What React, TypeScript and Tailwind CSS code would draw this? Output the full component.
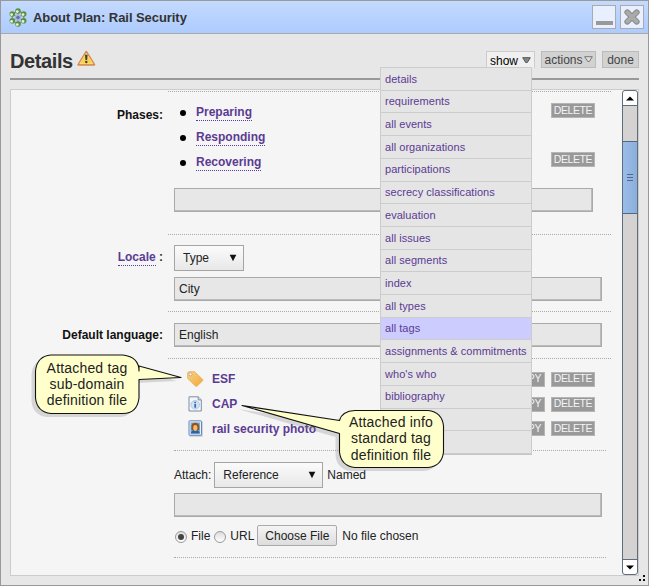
import React from "react";

const menuItems = [
  "details", "requirements", "all events", "all organizations", "participations",
  "secrecy classifications", "evaluation", "all issues", "all segments", "index",
  "all types", "all tags", "assignments & commitments", "who's who", "bibliography", "", "",
];

function PlanIcon() {
  const petals = [[9, 3], [14.7, 6], [14.7, 12.8], [9, 16], [3.3, 12.8], [3.3, 6]];
  return (
    <svg width="18" height="19" viewBox="0 0 18 19">
      <path d="M9 3L14.7 6V12.8L9 16L3.3 12.8V6ZM9 3V16M3.3 6L14.7 12.8M14.7 6L3.3 12.8" fill="none" stroke="#7f9f86" strokeWidth="1.5" />
      {petals.map(([x, y]) => (
        <g key={`${x}-${y}`}>
          <circle cx={x} cy={y} r="2.8" fill="#5c9142" />
          <circle cx={x - 0.7} cy={y + 0.6} r="1.4" fill="#e8f2e2" />
        </g>
      ))}
      <circle cx="9" cy="9.5" r="3.2" fill="#a9b5df" />
      <circle cx="9" cy="9.5" r="1.8" fill="#6670b4" />
    </svg>
  );
}

function WarningIcon() {
  return (
    <svg width="19" height="17" viewBox="0 0 19 17">
      <path d="M9.3 1.8L17.3 14.7H1.3Z" fill="#fdc84c" stroke="#d58b4e" strokeWidth="2" strokeLinejoin="round" />
      <path d="M9.3 3.3L15.9 13.7H2.7Z" fill="#ffcf45" stroke="#ffe69b" strokeWidth="0.7" />
      <path d="M8 4.8H10.6L10.1 10H8.5Z" fill="#38404a" />
      <circle cx="9.3" cy="12" r="1.2" fill="#38404a" />
    </svg>
  );
}

function TagIcon() {
  return (
    <svg width="18" height="18" viewBox="0 0 18 18">
      <defs>
        <linearGradient id="tag" x1="0" y1="0" x2="1" y2="1">
          <stop stopColor="#f6d28c" />
          <stop offset="1" stopColor="#f3a839" />
        </linearGradient>
      </defs>
      <path d="M1.5 3.2Q1.6 1.8 3 1.7L8.5 1.6L16.6 9.3Q17.3 10.2 16.5 11L11.2 16Q10.2 16.8 9.3 15.9L1.6 8.4Z" fill="url(#tag)" stroke="#e5ad53" strokeWidth="0.7" />
      <circle cx="4.5" cy="4.3" r="1.5" fill="#fff" stroke="#b7925a" strokeWidth="0.7" />
    </svg>
  );
}

function InfoFileIcon() {
  return (
    <svg width="15" height="16" viewBox="0 0 15 16">
      <path d="M1 0.8H10.2L13.3 3.9V15H1Z" fill="#f3f7fb" stroke="#7f8da3" />
      <path d="M10.2 0.8V3.9H13.3" fill="#d5dfea" stroke="#7f8da3" />
      <circle cx="7.2" cy="8.8" r="4.3" fill="#d3e3f2" stroke="#a9bfd6" strokeWidth="0.8" />
      <path d="M7.2 5.8V7.2M7.2 8V11.7" stroke="#2c74bd" strokeWidth="1.8" />
    </svg>
  );
}

function PhotoIcon() {
  return (
    <svg width="15" height="17" viewBox="0 0 15 17">
      <rect x="1.5" y="1.5" width="13" height="15" fill="#b8b8bb" />
      <rect x="1" y="0.8" width="12.5" height="14.4" rx="0.6" fill="#e8f0fa" stroke="#6188bb" />
      <rect x="2.5" y="2.4" width="9.5" height="11.2" fill="#79aee4" />
      <path d="M3 12.8Q3.5 10 7.2 9.8Q11 10 11.6 12.8V13.6H3Z" fill="#2f639f" />
      <path d="M3.4 10V6Q3.8 2.8 7.3 2.7Q10.9 2.8 11.2 6V10Z" fill="#96531b" />
      <ellipse cx="7.3" cy="8" rx="2.1" ry="2.9" fill="#f2bd68" />
    </svg>
  );
}

function Divider({ short = false }: { short?: boolean }) {
  return <div className={short ? "ml-[163px] w-[432px] border-t border-dotted border-[#aaaaaa]" : "ml-[157px] w-[443px] border-t border-dotted border-[#aaaaaa]"} />;
}

function Tool({ children, wide = false }: { children: React.ReactNode; wide?: boolean }) {
  return (
    <span className={`${wide ? "w-[44px]" : "w-[36px]"} flex h-[15px] shrink-0 items-center justify-center border border-[#b5b5b5] bg-[#999] text-[10.5px] tracking-[-0.4px] text-[#f4f4f4]`}>
      {children}
    </span>
  );
}

function PhaseRow({ name, del = false }: { name: string; del?: boolean }) {
  return (
    <div className="flex h-[24.8px] items-center">
      <span className="ml-[6px] mr-[10px] size-[6px] rounded-full bg-black" />
      <span className="h-[16px] border-b border-dotted border-[#5b3b9b] text-[12px] font-bold leading-[15px] text-[#5b3b93]">{name}</span>
      {del && <span className="-mt-[6px] ml-auto mr-[5px]"><Tool wide>DELETE</Tool></span>}
    </div>
  );
}

function AttachmentRow({ icon, name }: { icon: React.ReactNode; name: string }) {
  return (
    <div className="flex h-[24.7px] items-center">
      <span className="ml-[12px] flex w-[18px] justify-center">{icon}</span>
      <span className="ml-[8px] text-[12px] font-bold text-[#5b3b93]">{name}</span>
      <span className="ml-auto mr-[16px] flex gap-[6px]"><Tool>COPY</Tool><Tool wide>DELETE</Tool></span>
    </div>
  );
}

const field = "flex items-center border border-[#aaa] bg-[#e7e7e7] pl-[4px] text-[12px] text-[#222] shadow-[inset_-1px_-1px_0_#bbb]";
const select = "flex items-center justify-between border border-[#a5a5a5] bg-linear-to-b from-[#fbfbfb] to-[#e8e8e8] pl-[8px] pr-[6px] text-[12px] text-[#222]";

function DownArrow() {
  return <svg width="8" height="8" viewBox="0 0 8 8"><path d="M0.7 0.7H7.3L4 7.3Z" fill="#111" /></svg>;
}

function Radio({ checked = false }: { checked?: boolean }) {
  return (
    <span className="mt-[2px] flex size-[12px] items-center justify-center rounded-full border border-[#999] bg-linear-to-b from-[#ddd] to-white">
      {checked && <span className="size-[6px] rounded-full bg-[#444]" />}
    </span>
  );
}

function ScrollBar() {
  return (
    <div className="flex h-[485px] w-[16px] shrink-0 flex-col rounded-[3px] border border-[#606b7c] bg-[#d5d3d1]">
      <div className="flex h-[15px] items-center justify-center rounded-t-[3px] border-b border-[#606b7c] bg-white">
        <svg width="8" height="5"><path d="M0 4.5L4 0.5L8 4.5Z" fill="#000" /></svg>
      </div>
      <div className="mt-[35px] flex h-[73px] flex-col items-center justify-center gap-[2px] border-y border-[#526986] bg-linear-to-r from-[#9abde9] to-[#8baedb]">
        <span className="h-px w-[6px] bg-[#526986]" />
        <span className="h-px w-[6px] bg-[#526986]" />
        <span className="h-px w-[6px] bg-[#526986]" />
      </div>
      <div className="mt-auto flex h-[15px] items-center justify-center rounded-b-[3px] border-t border-[#606b7c] bg-white">
        <svg width="8" height="5"><path d="M0 0.5L4 4.5L8 0.5Z" fill="#000" /></svg>
      </div>
    </div>
  );
}

function Callouts() {
  const first = "M51 355H123Q139 357 139 371V366L181 377.5L139 379.5V398Q137 413.5 123 413.5H51Q37 412 35.5 398V371Q37 356 51 355Z";
  const second = "M355 410.5H428Q442 412 443.5 426V452Q442 466 428 467.5H355Q341 466 339.5 452V433.5L242 405.5L339.5 420.5Q342 411 355 410.5Z";
  return (
    <div className="pointer-events-none absolute inset-0">
      <svg width="650" height="586" className="absolute inset-0">
        <g transform="translate(-4 3.5)" fill="#777" opacity="0.25"><path d={first} /><path d={second} /></g>
        <g fill="#ffffcc" stroke="#111" strokeWidth="1.1" strokeLinejoin="round"><path d={first} /><path d={second} /></g>
      </svg>
      <p className="absolute left-[35px] top-[360px] w-[104px] text-center text-[14px] leading-[16px] tracking-[0.18px] text-[#222]">Attached tag<br />sub-domain<br />definition file</p>
      <p className="absolute left-[339px] top-[414px] w-[104px] text-center text-[14px] leading-[16.4px] tracking-[0.18px] text-[#222]">Attached info<br />standard tag<br />definition file</p>
    </div>
  );
}

export default function App() {
  return (
    <div className="relative h-[586px] w-[650px] overflow-hidden bg-white font-['Liberation_Sans',Arial,sans-serif]">
      <div className="flex h-[586px] w-[649px] flex-col border border-[#999] bg-[#e7e7e7]">
        <header className="flex h-[33px] shrink-0 items-center border-b border-[#aaa] bg-linear-to-b from-[#c4dafe] to-[#adcbfe] pl-[8px]">
          <PlanIcon />
          <h1 className="ml-[6px] mt-px text-[13px] font-bold tracking-[-0.06px] text-[#333]">About Plan: Rail Security</h1>
          <div className="ml-auto mr-[4px] flex gap-[4px]">
            <span className="flex h-[24px] w-[24px] items-end justify-center border border-[#aaa] bg-[#e8f0ff] pb-[3px]"><span className="h-[4px] w-[17px] bg-[#999]" /></span>
            <span className="flex h-[24px] w-[24px] items-center justify-center border border-[#aaa] bg-[#e8f0ff]">
              <svg width="18" height="18" viewBox="0 0 18 18"><path d="M4.3 4.3L13.7 13.7M13.7 4.3L4.3 13.7" stroke="#858585" strokeWidth="5.8" strokeLinecap="round" /><path d="M4.3 4.3L13.7 13.7M13.7 4.3L4.3 13.7" stroke="#aaa" strokeWidth="4" strokeLinecap="round" /></svg>
            </span>
          </div>
        </header>

        <div className="mx-[9px] flex h-[46px] shrink-0 items-start border-b-2 border-[#999]">
          <h2 className="mt-[14px] text-[20px] font-bold leading-[26px] tracking-[-0.4px] text-[#333]">Details</h2>
          <span className="ml-[4px] mt-[16px]"><WarningIcon /></span>
          <div className="ml-auto mt-[17px] flex gap-[6px] text-[12px] text-[#444]">
            <span className="flex h-[17px] w-[49px] items-center justify-center gap-[4px] border border-b-0 border-[#ccc] bg-[#f0f0f0] text-black"><span className="mt-px">show</span><svg width="9" height="7"><path d="M0.7 0.7H8.3L5.3 5.5H3.7Z" fill="#888" stroke="#555" /></svg></span>
            <span className="flex h-[17px] w-[55px] items-center justify-center gap-[1px] border border-[#bbb] bg-[#d2d2d2]"><span className="mt-px">actions</span><svg width="9" height="7"><path d="M0.7 0.7H8.3L5.3 5.5H3.7Z" fill="#ddd" stroke="#777" /></svg></span>
            <span className="flex h-[17px] w-[37px] items-center justify-center border border-[#bbb] bg-[#d2d2d2]"><span className="mt-px">done</span></span>
          </div>
        </div>

        <div className="mx-[9px] mt-[9px] flex h-[487px] shrink-0 border border-[#ccc] bg-[#f5f5f5]">
          <main className="flex w-[611px] shrink-0 flex-col pt-px">
            <Divider />
            <section className="flex h-[142px]">
              <span className="w-[152px] pt-[14px] text-right text-[12px] font-bold text-[#111]">Phases:</span>
              <div className="ml-[11px] w-[426px] pt-[9px]">
                <PhaseRow name="Preparing" del />
                <PhaseRow name="Responding" />
                <PhaseRow name="Recovering" del />
                <div className={`${field} mt-[13px] h-[24px] w-[419px]`} />
              </div>
            </section>
            <Divider />
            <section className="flex h-[76px]">
              <div className="w-[152px] pt-[15px] text-right text-[12px] font-bold leading-[15px] text-[#333]"><span className="inline-block border-b border-dotted border-[#5b3b93] text-[#5b3b93]">Locale</span> :</div>
              <div className="ml-[11px] pt-[10px]">
                <div className={`${select} h-[26px] w-[70px]`}>Type<DownArrow /></div>
                <div className={`${field} mt-[6px] h-[24px] w-[428px]`}>City</div>
              </div>
            </section>
            <Divider />
            <section className="flex h-[46px]">
              <span className="w-[152px] pt-[14px] text-right text-[12px] font-bold text-[#111]">Default language:</span>
              <div className={`${field} ml-[11px] mt-[11px] h-[24px] w-[428px]`}>English</div>
            </section>
            <Divider />
            <section className="ml-[163px] h-[91px] w-[437px] pt-[8px]">
              <AttachmentRow icon={<TagIcon />} name="ESF" />
              <AttachmentRow icon={<InfoFileIcon />} name="CAP" />
              <AttachmentRow icon={<PhotoIcon />} name="rail security photo" />
            </section>
            <Divider short />
            <section className="ml-[163px] h-[106px] pt-[11px] text-[12px] text-[#222]">
              <div className="flex h-[26px] items-center">
                Attach:<div className={`${select} ml-[3px] mr-[4px] h-[26px] w-[109px]`}>Reference<DownArrow /></div>Named
              </div>
              <div className={`${field} mt-[5px] h-[24px] w-[428px]`} />
              <div className="mt-[8px] flex h-[21px] items-center pl-[1px]">
                <Radio checked /><span className="ml-[4px] mr-[4px]">File</span><Radio /><span className="ml-[4px] mr-[3px]">URL</span>
                <span className="mr-[5px] flex h-[21px] w-[80px] items-center justify-center rounded-[2px] border border-[#aaa] bg-linear-to-b from-[#f5f5f5] to-[#ddd]">Choose File</span>No file chosen
              </div>
            </section>
            <Divider short />
          </main>
          <ScrollBar />
        </div>
      </div>

      <nav className="absolute left-[380px] top-[67px] flex h-[387px] w-[152px] flex-col border border-[#ccc] bg-[#e5e5e5] shadow-[0_1px_0_#c5c5c5]">
        {menuItems.map((item, index) => (
          <span key={index} className={`${item === "all tags" ? "bg-[#ccccff]" : ""} flex min-h-0 flex-1 items-center whitespace-nowrap border-b border-[#ccc] pl-[4px] text-[11px] tracking-[0.04px] text-[#5b3b93] last:border-b-0`}>{item}</span>
        ))}
      </nav>
      <svg className="absolute bottom-[3px] right-[4px]" width="8" height="8"><path d="M5 0h2v2H5zM1 4h2v2H1zM5 4h2v2H5z" fill="#111" /></svg>
      <Callouts />
    </div>
  );
}
